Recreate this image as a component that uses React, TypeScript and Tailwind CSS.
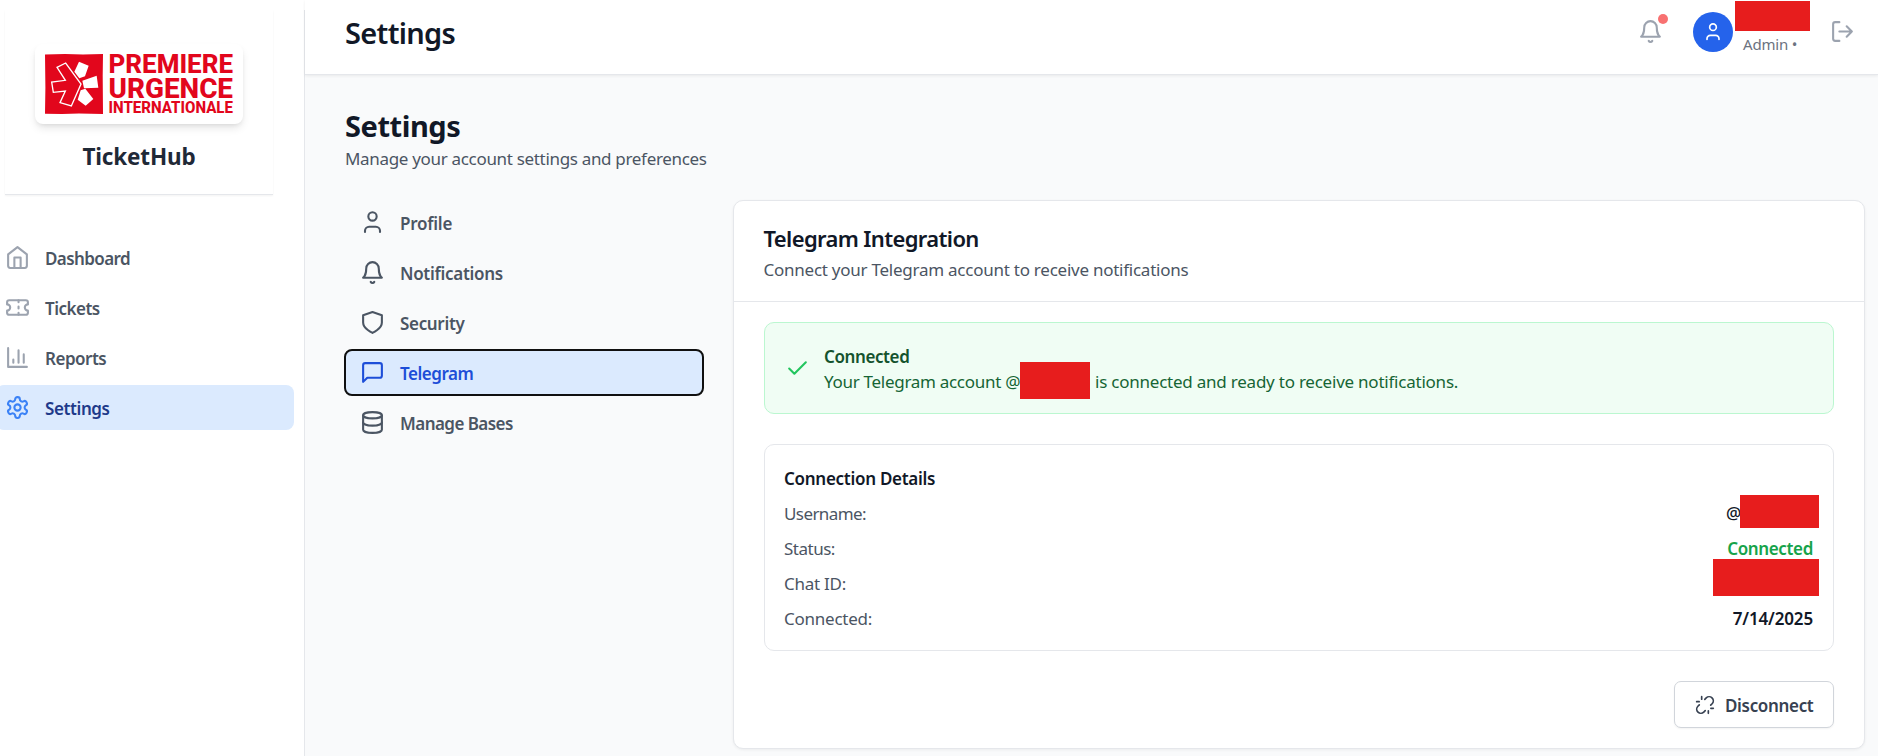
import type { ReactNode } from "react";

function Icon({ children, className = "size-[25px]", stroke = 2 }: { children: ReactNode; className?: string; stroke?: number }) {
  return (
    <svg
      viewBox="0 0 24 24"
      fill="none"
      stroke="currentColor"
      strokeWidth={stroke}
      strokeLinecap="round"
      strokeLinejoin="round"
      className={`${className} shrink-0`}
    >
      {children}
    </svg>
  );
}

const glyphs = {
  home: (
    <>
      <path d="m3 9 9-7 9 7v11a2 2 0 0 1-2 2H5a2 2 0 0 1-2-2z" />
      <path d="M9 22V12h6v10" />
    </>
  ),
  ticket: (
    <>
      <path d="M2 9a3 3 0 0 1 0 6v2a2 2 0 0 0 2 2h16a2 2 0 0 0 2-2v-2a3 3 0 0 1 0-6V7a2 2 0 0 0-2-2H4a2 2 0 0 0-2 2Z" />
      <path d="M13 5v2M13 17v2M13 11v2" />
    </>
  ),
  chart: <path d="M3 3v18h18M18 17V9M13 17V5M8 17v-3" />,
  gear: (
    <>
      <path d="M12.22 2h-.44a2 2 0 0 0-2 2v.18a2 2 0 0 1-1 1.73l-.43.25a2 2 0 0 1-2 0l-.15-.08a2 2 0 0 0-2.73.73l-.22.38a2 2 0 0 0 .73 2.73l.15.1a2 2 0 0 1 1 1.72v.51a2 2 0 0 1-1 1.74l-.15.09a2 2 0 0 0-.73 2.73l.22.38a2 2 0 0 0 2.73.73l.15-.08a2 2 0 0 1 2 0l.43.25a2 2 0 0 1 1 1.73V20a2 2 0 0 0 2 2h.44a2 2 0 0 0 2-2v-.18a2 2 0 0 1 1-1.73l.43-.25a2 2 0 0 1 2 0l.15.08a2 2 0 0 0 2.73-.73l.22-.39a2 2 0 0 0-.73-2.73l-.15-.08a2 2 0 0 1-1-1.74v-.5a2 2 0 0 1 1-1.74l.15-.09a2 2 0 0 0 .73-2.73l-.22-.38a2 2 0 0 0-2.73-.73l-.15.08a2 2 0 0 1-2 0l-.43-.25a2 2 0 0 1-1-1.73V4a2 2 0 0 0-2-2z" />
      <circle cx="12" cy="12" r="3" />
    </>
  ),
  user: (
    <>
      <path d="M19.2 21v-1a4 4 0 0 0-4-4H8.8a4 4 0 0 0-4 4v1" />
      <circle cx="12" cy="6.2" r="4" />
    </>
  ),
  bell: (
    <>
      <path d="M6 8a6 6 0 0 1 12 0c0 7 3 9 3 9H3s3-2 3-9" />
      <path d="M10.3 21a1.94 1.94 0 0 0 3.4 0" />
    </>
  ),
  shield: <path d="M12 22s9-4 9-10V5l-9-3-9 3v7c0 6 9 10 9 10" />,
  message: <path d="M21 15a2 2 0 0 1-2 2H7l-4 4V5a2 2 0 0 1 2-2h14a2 2 0 0 1 2 2z" />,
  database: (
    <>
      <ellipse cx="12" cy="5" rx="9" ry="3" />
      <path d="M3 5v14a9 3 0 0 0 18 0V5" />
      <path d="M3 12a9 3 0 0 0 18 0" />
    </>
  ),
  logout: (
    <>
      <path d="M9 21H5a2 2 0 0 1-2-2V5a2 2 0 0 1 2-2h4" />
      <path d="m16 17 5-5-5-5M21 12H9" />
    </>
  ),
  unlink: (
    <>
      <path d="m18.84 12.25 1.72-1.71h-.02a5.004 5.004 0 0 0-.12-7.07 5.006 5.006 0 0 0-6.95 0l-1.72 1.71" />
      <path d="m5.17 11.75-1.71 1.71a5.004 5.004 0 0 0 .12 7.07 5.006 5.006 0 0 0 6.95 0l1.71-1.71" />
      <path d="M8 2v3M2 8h3M16 19v3M19 16h3" />
    </>
  ),
};

function Logo() {
  return (
    <svg viewBox="0 0 188 60" className="h-[60px] w-[188px] overflow-visible">
      <path d="M0 .5 20 0l18 .6L58 0l-.3 22 .3 38-24-.4-17 .4-17-.3.4-26z" fill="#e2061c" />
      <g transform="translate(-15 -19) scale(.33333)">
        <path d="M133 110 147 80 176 92 165 124 148 130ZM157 137 200 122 205 158 162 160ZM152 166 166 161 190 192 167 212 143 194Z" fill="#fff" />
        <path d="M81 97 107 84 153 147 124 213 90 203 106 168 70 172 65 141 106 136Z" fill="#e2061c" stroke="#fff" strokeWidth="4" />
      </g>
      <g fill="#e2061c" fontFamily="Roboto, sans-serif" fontWeight="800">
        <text x="63.5" y="19.2" fontSize="26" textLength="124.5" lengthAdjust="spacingAndGlyphs">PREMIERE</text>
        <text x="63.5" y="43.8" fontSize="27.5" textLength="124.5" lengthAdjust="spacingAndGlyphs">URGENCE</text>
        <text x="63.5" y="59.4" fontSize="15.6" textLength="124.5" lengthAdjust="spacingAndGlyphs">INTERNATIONALE</text>
      </g>
    </svg>
  );
}

const mainNav = [
  { label: "Dashboard", icon: glyphs.home, tracking: "tracking-[-0.6px]" },
  { label: "Tickets", icon: glyphs.ticket, tracking: "tracking-[-0.5px]" },
  { label: "Reports", icon: glyphs.chart, tracking: "tracking-[-0.5px]" },
  { label: "Settings", icon: glyphs.gear, tracking: "tracking-[-0.4px]", active: true },
];

const settingsNav = [
  { label: "Profile", icon: glyphs.user, tracking: "tracking-[-0.25px]" },
  { label: "Notifications", icon: glyphs.bell, tracking: "tracking-[-0.3px]" },
  { label: "Security", icon: glyphs.shield, tracking: "tracking-[-0.33px]" },
  { label: "Telegram", icon: glyphs.message, tracking: "tracking-[-0.48px]", active: true },
  { label: "Manage Bases", icon: glyphs.database, tracking: "tracking-[-0.55px]" },
];

function Sidebar() {
  return (
    <aside className="mt-[10px] w-[305px] shrink-0 border-r border-[#e5e7eb] bg-white">
      <div className="ml-[5px] flex h-[185px] w-[268px] flex-col items-center border-b border-[#e5e7eb] pt-[34px] shadow-[0_1px_2px_rgba(0,0,0,0.05)]">
        <div className="flex h-[80px] w-[208px] items-center justify-center rounded-[8px] bg-white shadow-[0_5px_8px_-1px_rgba(0,0,0,0.1),0_2px_5px_-2px_rgba(0,0,0,0.1)]">
          <Logo />
        </div>
        <div className="mt-[19px] text-[22.5px] leading-[28px] font-bold tracking-[-0.15px] text-[#1f2937]">TicketHub</div>
      </div>
      <nav className="mt-[40px] -ml-1 mr-[10px] flex flex-col gap-[5px]">
        {mainNav.map((n) => (
          <a
            key={n.label}
            className={`flex h-[45px] items-center gap-[15px] rounded-[8px] pl-[9px] font-semibold ${n.active ? "bg-[#dbeafe] text-[#1e3a8a]" : "text-[#4b5563]"}`}
          >
            <span className={n.active ? "text-[#3b82f6]" : "text-[#9ca3af]"}>
              <Icon>{n.icon}</Icon>
            </span>
            <span className={`pt-px ${n.tracking}`}>{n.label}</span>
          </a>
        ))}
      </nav>
    </aside>
  );
}

function Header() {
  return (
    <header className="relative z-10 flex h-[75px] shrink-0 items-start justify-between border-b border-[#e5e7eb] bg-white pr-[23px] pl-[40px] shadow-[0_1px_3px_rgba(0,0,0,0.07)]">
      <div className="mt-[13px] text-[29px] leading-[40px] font-semibold tracking-[-0.68px] text-[#111827]">Settings</div>
      <div className="flex items-start">
        <div className="relative mt-[19px] text-[#9ca3af]">
          <Icon>{glyphs.bell}</Icon>
          <span className="absolute -top-[5px] left-[20px] size-[10px] rounded-full bg-[#f87171]" />
        </div>
        <div className="mt-[12px] ml-[30px] flex size-[40px] items-center justify-center rounded-full bg-[#2563eb] text-white">
          <Icon className="size-[20px]">{glyphs.user}</Icon>
        </div>
        <div className="ml-[2px] flex w-[75px] flex-col pt-px">
          <div className="h-[30px] bg-[#e71d1d]" />
          <div className="mt-[3px] pl-[8px] text-[15px] leading-[20px] tracking-[-0.2px] whitespace-nowrap text-[#6b7280]">Admin •</div>
        </div>
        <div className="mt-[19px] ml-[20px] text-[#9ca3af]">
          <Icon>{glyphs.logout}</Icon>
        </div>
      </div>
    </header>
  );
}

function Row({ label, labelTracking, children }: { label: string; labelTracking: string; children: ReactNode }) {
  return (
    <div className="flex h-[25px] items-center justify-between">
      <span className={`pt-px text-[#4b5563] ${labelTracking}`}>{label}</span>
      {children}
    </div>
  );
}

function TelegramCard() {
  return (
    <section className="flex h-[549px] w-[1132px] flex-col rounded-[10px] border border-[#e5e7eb] bg-white shadow-[0_1px_3px_rgba(0,0,0,0.06)]">
      <div className="h-[101px] border-b border-[#e5e7eb] pr-[30px] pl-[29.5px] pt-[21px]">
        <h2 className="text-[22px] leading-[32px] font-semibold tracking-[-0.64px] text-[#111827]">Telegram Integration</h2>
        <p className="mt-[3px] tracking-[-0.25px] text-[#4b5563]">Connect your Telegram account to receive notifications</p>
      </div>
      <div className="flex flex-col px-[30px] pt-[20px]">
        <div className="flex h-[92px] items-center gap-[14px] rounded-[10px] border border-[#bbf7d0] bg-[#f0fdf4] pl-[20px]">
          <span className="text-[#22c55e]">
            <Icon>
              <path d="M20 6 9 17l-5-5" />
            </Icon>
          </span>
          <div>
            <div className="pt-px font-semibold tracking-[-0.4px] text-[#14532d]">Connected</div>
            <div className="-mt-px flex h-[25px] items-center text-[#166534]">
              <span className="w-[196px] pt-px tracking-[-0.29px] whitespace-nowrap">Your Telegram account @</span>
              <span className="h-[37px] w-[70px] shrink-0 bg-[#e71d1d]" />
              <span className="pt-px pl-[5px] tracking-[-0.23px]">is connected and ready to receive notifications.</span>
            </div>
          </div>
        </div>
        <div className="mt-[30px] flex h-[207px] flex-col gap-[10px] rounded-[10px] border border-[#e5e7eb] pr-[20px] pl-[19px] pt-[20px]">
          <h3 className="pt-px font-semibold tracking-[-0.28px] text-[#111827]">Connection Details</h3>
          <div className="-mt-px flex flex-col gap-[10px]">
            <Row label="Username:" labelTracking="tracking-[-0.58px]">
              <span className="-mr-[6px] flex items-center font-medium text-[#111827]">
                <span className="w-[14px]">@</span>
                <span className="-mt-[2px] h-[33px] w-[79px] bg-[#e71d1d]" />
              </span>
            </Row>
            <Row label="Status:" labelTracking="tracking-[-0.49px]">
              <span className="pt-px font-semibold tracking-[-0.35px] text-[#16a34a]">Connected</span>
            </Row>
            <Row label="Chat ID:" labelTracking="tracking-[-0.26px]">
              <span className="-mt-[10px] -mr-[6px] h-[37px] w-[106px] bg-[#e71d1d]" />
            </Row>
            <Row label="Connected:" labelTracking="tracking-[-0.25px]">
              <span className="pt-px font-semibold tracking-[-0.15px] text-[#111827]">7/14/2025</span>
            </Row>
          </div>
        </div>
        <button className="mt-[30px] flex h-[47px] w-[160px] items-center gap-[10px] self-end rounded-[7px] border border-[#d1d5db] bg-white pl-[20px] font-semibold text-[#374151] shadow-[0_1px_2px_rgba(0,0,0,0.05)]">
          <Icon className="size-[20px]">{glyphs.unlink}</Icon>
          <span className="pt-px tracking-[-0.33px]">Disconnect</span>
        </button>
      </div>
    </section>
  );
}

export default function App() {
  return (
    <div className="flex h-[756px] w-[1878px] overflow-hidden bg-white font-['Noto_Sans',sans-serif] text-[17px] leading-[25px]">
      <Sidebar />
      <div className="flex min-w-0 flex-1 flex-col">
        <Header />
        <main className="flex-1 bg-[#f9fafb] pl-[40px]">
          <h1 className="pt-[31px] text-[29px] leading-[40px] font-bold tracking-[-0.45px] text-[#111827]">Settings</h1>
          <p className="tracking-[-0.32px] text-[#4b5563]">Manage your account settings and preferences</p>
          <div className="mt-[29px] flex items-start">
            <nav className="flex w-[358px] flex-col gap-[5px]">
              {settingsNav.map((n) => (
                <a
                  key={n.label}
                  className={`flex items-center gap-[15px] rounded-[8px] font-semibold ${
                    n.active
                      ? "-mx-px -my-px h-[47px] border-2 border-[#101010] bg-[#dbeafe] pl-[14px] text-[#1d4ed8]"
                      : "h-[45px] pl-[15px] text-[#4b5563]"
                  }`}
                >
                  <Icon>{n.icon}</Icon>
                  <span className={`pt-px ${n.tracking}`}>{n.label}</span>
                </a>
              ))}
            </nav>
            <div className="ml-[30px]">
              <TelegramCard />
            </div>
          </div>
        </main>
      </div>
    </div>
  );
}
